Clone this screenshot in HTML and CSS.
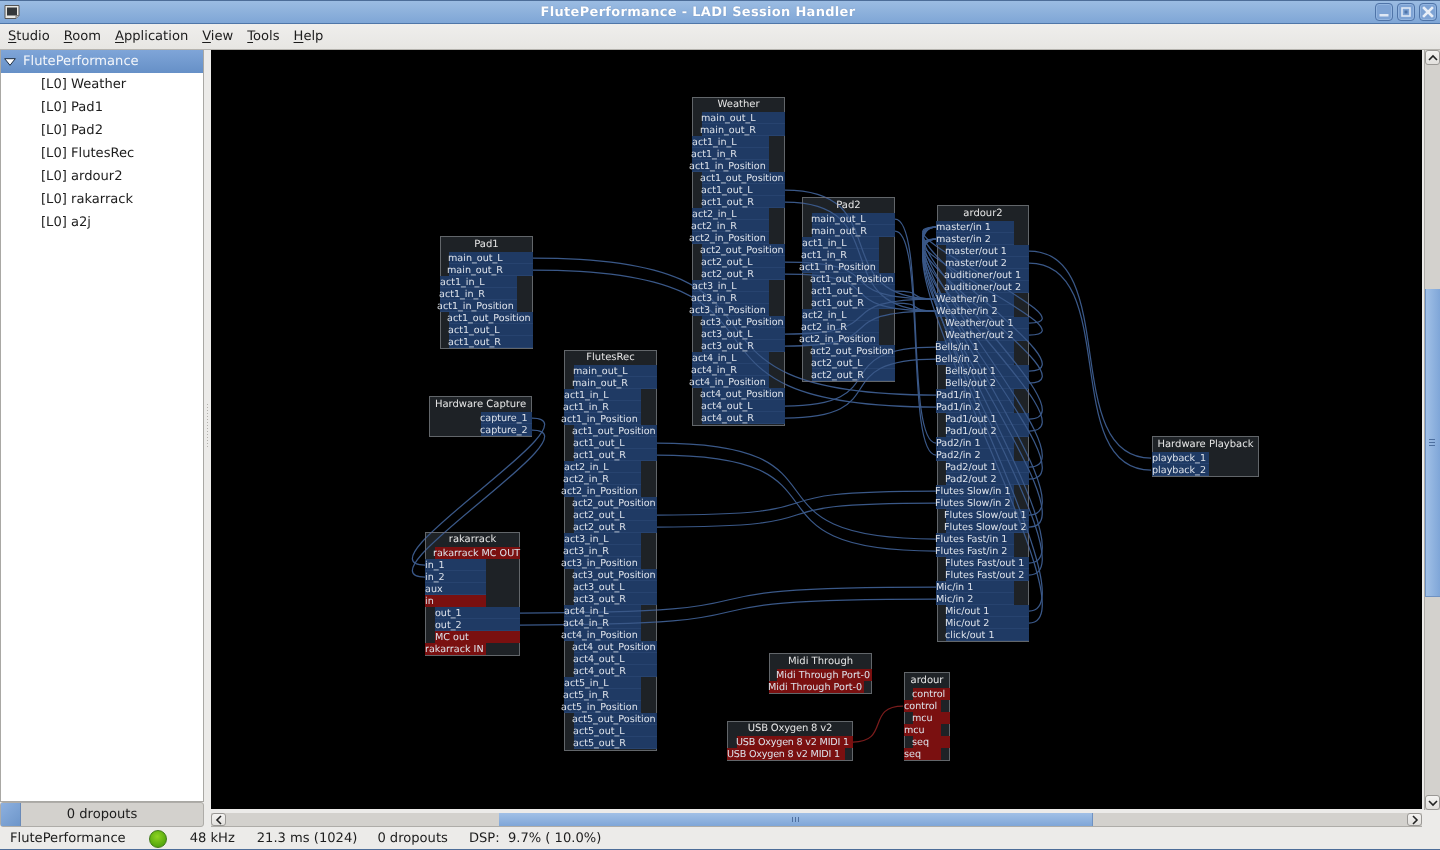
FILE: index.html
```html
<!DOCTYPE html>
<html lang="en">
<head>
<meta charset="utf-8">
<title>FlutePerformance - LADI Session Handler</title>
<link rel="stylesheet" href="styles.css">
</head>
<body>
<div class="window">
  <header class="titlebar">
    <svg class="appicon" width="16" height="16" viewBox="0 0 16 16"><path d="M1 1.5h14v10l-3 3H1z" fill="#e8e8e4" stroke="#555" stroke-width="1"/><rect x="3" y="3.5" width="10" height="8" fill="#33373a"/><path d="M12 14.5v-3h3" fill="#bbb" stroke="#777"/></svg>
    <div class="wintitle">FlutePerformance - LADI Session Handler</div>
    <div class="winbtns">
      <div class="winbtn"><svg width="18" height="18" viewBox="0 0 18 18"><rect x="4.5" y="11" width="9" height="2.5" fill="#dfe8f4"/></svg></div>
      <div class="winbtn"><svg width="18" height="18" viewBox="0 0 18 18"><rect x="5" y="5" width="8" height="8" fill="none" stroke="#dfe8f4" stroke-width="1.6"/><rect x="7.5" y="7.5" width="3" height="3" fill="#4f74a8"/></svg></div>
      <div class="winbtn"><svg width="18" height="18" viewBox="0 0 18 18"><path d="M5 5l8 8M13 5l-8 8" stroke="#e8eef7" stroke-width="2.6" stroke-linecap="square"/></svg></div>
    </div>
  </header>
  <nav class="menubar">
    <span class="menu"><u>S</u>tudio</span>
    <span class="menu"><u>R</u>oom</span>
    <span class="menu"><u>A</u>pplication</span>
    <span class="menu"><u>V</u>iew</span>
    <span class="menu"><u>T</u>ools</span>
    <span class="menu"><u>H</u>elp</span>
  </nav>
  <main class="content">
    <aside class="sidebar">
      <div class="tree">
        <div class="tree-head"><svg class="expander" width="12" height="8" viewBox="0 0 12 8"><path d="M.7.7h10.6L6 7.3z" fill="#fff" stroke="#1c2a3c" stroke-width="1"/></svg>FlutePerformance</div>
        <div class="tree-item">[L0] Weather</div>
        <div class="tree-item">[L0] Pad1</div>
        <div class="tree-item">[L0] Pad2</div>
        <div class="tree-item">[L0] FlutesRec</div>
        <div class="tree-item">[L0] ardour2</div>
        <div class="tree-item">[L0] rakarrack</div>
        <div class="tree-item">[L0] a2j</div>
      </div>
      <div class="progress"><div class="progress-fill"></div><span class="progress-text">0 dropouts</span></div>
    </aside>
    <div class="splitter"><div class="grip"></div></div>
    <section class="workspace">
      <div class="view-row">
        <div class="canvas">
          <div class="node n-pad1">
            <div class="title">Pad1</div>
            <div class="port out">main_out_L</div><div class="port out x2">main_out_R</div>
            <div class="port in">act1_in_L</div><div class="port in x1">act1_in_R</div><div class="port in x3">act1_in_Position</div>
            <div class="port out x2">act1_out_Position</div><div class="port out">act1_out_L</div><div class="port out">act1_out_R</div>
          </div>

          <div class="node n-weather short">
            <div class="title">Weather</div>
            <div class="port out">main_out_L</div><div class="port out x2">main_out_R</div>
            <div class="port in">act1_in_L</div><div class="port in x1">act1_in_R</div><div class="port in x3">act1_in_Position</div>
            <div class="port out x2">act1_out_Position</div><div class="port out">act1_out_L</div><div class="port out">act1_out_R</div>
            <div class="port in">act2_in_L</div><div class="port in x1">act2_in_R</div><div class="port in x3">act2_in_Position</div>
            <div class="port out x2">act2_out_Position</div><div class="port out">act2_out_L</div><div class="port out">act2_out_R</div>
            <div class="port in">act3_in_L</div><div class="port in x1">act3_in_R</div><div class="port in x3">act3_in_Position</div>
            <div class="port out x2">act3_out_Position</div><div class="port out">act3_out_L</div><div class="port out">act3_out_R</div>
            <div class="port in">act4_in_L</div><div class="port in x1">act4_in_R</div><div class="port in x3">act4_in_Position</div>
            <div class="port out x2">act4_out_Position</div><div class="port out">act4_out_L</div><div class="port out">act4_out_R</div>
          </div>

          <div class="node n-pad2">
            <div class="title">Pad2</div>
            <div class="port out">main_out_L</div><div class="port out x1">main_out_R</div>
            <div class="port in">act1_in_L</div><div class="port in x1">act1_in_R</div><div class="port in x3">act1_in_Position</div>
            <div class="port out x2">act1_out_Position</div><div class="port out">act1_out_L</div><div class="port out">act1_out_R</div>
            <div class="port in">act2_in_L</div><div class="port in x1">act2_in_R</div><div class="port in x3">act2_in_Position</div>
            <div class="port out x2">act2_out_Position</div><div class="port out">act2_out_L</div><div class="port out">act2_out_R</div>
          </div>

          <div class="node n-flutes short">
            <div class="title">FlutesRec</div>
            <div class="port out">main_out_L</div><div class="port out x2">main_out_R</div>
            <div class="port in">act1_in_L</div><div class="port in x1">act1_in_R</div><div class="port in x3">act1_in_Position</div>
            <div class="port out x2">act1_out_Position</div><div class="port out">act1_out_L</div><div class="port out">act1_out_R</div>
            <div class="port in">act2_in_L</div><div class="port in x1">act2_in_R</div><div class="port in x3">act2_in_Position</div>
            <div class="port out x2">act2_out_Position</div><div class="port out">act2_out_L</div><div class="port out">act2_out_R</div>
            <div class="port in">act3_in_L</div><div class="port in x1">act3_in_R</div><div class="port in x3">act3_in_Position</div>
            <div class="port out x2">act3_out_Position</div><div class="port out">act3_out_L</div><div class="port out">act3_out_R</div>
            <div class="port in">act4_in_L</div><div class="port in x1">act4_in_R</div><div class="port in x3">act4_in_Position</div>
            <div class="port out x2">act4_out_Position</div><div class="port out">act4_out_L</div><div class="port out">act4_out_R</div>
            <div class="port in">act5_in_L</div><div class="port in x1">act5_in_R</div><div class="port in x3">act5_in_Position</div>
            <div class="port out x2">act5_out_Position</div><div class="port out">act5_out_L</div><div class="port out">act5_out_R</div>
          </div>

          <div class="node n-ardour2">
            <div class="title">ardour2</div>
            <div class="port in">master/in 1</div><div class="port in">master/in 2</div>
            <div class="port out">master/out 1</div><div class="port out">master/out 2</div>
            <div class="port out x2">auditioner/out 1</div><div class="port out x2">auditioner/out 2</div>
            <div class="port in">Weather/in 1</div><div class="port in">Weather/in 2</div>
            <div class="port out">Weather/out 1</div><div class="port out">Weather/out 2</div>
            <div class="port in x1">Bells/in 1</div><div class="port in x1">Bells/in 2</div>
            <div class="port out">Bells/out 1</div><div class="port out">Bells/out 2</div>
            <div class="port in">Pad1/in 1</div><div class="port in">Pad1/in 2</div>
            <div class="port out">Pad1/out 1</div><div class="port out">Pad1/out 2</div>
            <div class="port in">Pad2/in 1</div><div class="port in">Pad2/in 2</div>
            <div class="port out">Pad2/out 1</div><div class="port out">Pad2/out 2</div>
            <div class="port in x1">Flutes Slow/in 1</div><div class="port in x1">Flutes Slow/in 2</div>
            <div class="port out x2">Flutes Slow/out 1</div><div class="port out x2">Flutes Slow/out 2</div>
            <div class="port in x1">Flutes Fast/in 1</div><div class="port in x1">Flutes Fast/in 2</div>
            <div class="port out">Flutes Fast/out 1</div><div class="port out">Flutes Fast/out 2</div>
            <div class="port in">Mic/in 1</div><div class="port in">Mic/in 2</div>
            <div class="port out">Mic/out 1</div><div class="port out">Mic/out 2</div>
            <div class="port out">click/out 1</div>
          </div>

          <div class="node n-capture">
            <div class="title">Hardware Capture</div>
            <div class="port out">capture_1</div><div class="port out">capture_2</div>
          </div>

          <div class="node n-playback">
            <div class="title">Hardware Playback</div>
            <div class="port in">playback_1</div><div class="port in">playback_2</div>
          </div>

          <div class="node n-rakarrack short">
            <div class="title">rakarrack</div>
            <div class="port out midi x2">rakarrack MC OUT</div>
            <div class="port in">in_1</div><div class="port in">in_2</div><div class="port in">aux</div>
            <div class="port in midi">in</div>
            <div class="port out">out_1</div><div class="port out">out_2</div>
            <div class="port out midi">MC out</div>
            <div class="port in midi">rakarrack IN</div>
          </div>

          <div class="node n-midi">
            <div class="title">Midi Through</div>
            <div class="port out midi">Midi Through Port-0</div>
            <div class="port in midi">Midi Through Port-0</div>
          </div>

          <div class="node n-usb short">
            <div class="title">USB Oxygen 8 v2</div>
            <div class="port out midi">USB Oxygen 8 v2 MIDI 1</div>
            <div class="port in midi">USB Oxygen 8 v2 MIDI 1</div>
          </div>

          <div class="node n-ardour">
            <div class="title">ardour</div>
            <div class="port out midi">control</div><div class="port in midi">control</div>
            <div class="port out midi">mcu</div><div class="port in midi">mcu</div>
            <div class="port out midi">seq</div><div class="port in midi">seq</div>
          </div>

          <svg class="wires" width="1211" height="759" viewBox="211 50 1211 759">
            <g class="audio">
              <path d="M532 418C602 418 355 565 425 565"/>
              <path d="M532 430C602 430 355 577 425 577"/>
              <path d="M533 258C835 258 634 395 936 395"/>
              <path d="M533 270C835 270 634 407 936 407"/>
              <path d="M785 190C898 190 823 299 936 299"/>
              <path d="M785 202C898 202 823 311 936 311"/>
              <path d="M785 262C898 262 823 299 936 299"/>
              <path d="M785 274C898 274 823 311 936 311"/>
              <path d="M785 334C898 334 823 299 936 299"/>
              <path d="M785 346C898 346 823 311 936 311"/>
              <path d="M785 406C898 406 823 347 936 347"/>
              <path d="M785 418C898 418 823 359 936 359"/>
              <path d="M895 219C926 219 905 443 936 443"/>
              <path d="M895 231C926 231 905 455 936 455"/>
              <path d="M895 291C926 291 905 299 936 299"/>
              <path d="M895 303C926 303 905 311 936 311"/>
              <path d="M657 443C866 443 727 539 936 539"/>
              <path d="M657 455C866 455 727 551 936 551"/>
              <path d="M657 515C866 515 727 491 936 491"/>
              <path d="M657 527C866 527 727 503 936 503"/>
              <path d="M520 613C832 613 624 587 936 587"/>
              <path d="M520 625C832 625 624 599 936 599"/>
              <path d="M1029 251C1121 251 1059 458 1151 458"/>
              <path d="M1029 263C1121 263 1059 470 1151 470"/>
              <path d="M1029 323C1099 323 866 227 936 227"/>
              <path d="M1029 335C1099 335 866 239 936 239"/>
              <path d="M1029 371C1099 371 866 227 936 227"/>
              <path d="M1029 383C1099 383 866 239 936 239"/>
              <path d="M1029 419C1099 419 866 227 936 227"/>
              <path d="M1029 431C1099 431 866 239 936 239"/>
              <path d="M1029 467C1099 467 866 227 936 227"/>
              <path d="M1029 479C1099 479 866 239 936 239"/>
              <path d="M1029 515C1099 515 866 227 936 227"/>
              <path d="M1029 527C1099 527 866 239 936 239"/>
              <path d="M1029 563C1099 563 866 227 936 227"/>
              <path d="M1029 575C1099 575 866 239 936 239"/>
              <path d="M1029 611C1099 611 866 227 936 227"/>
              <path d="M1029 623C1099 623 866 239 936 239"/>
            </g>
            <path class="midiwire" d="M853 742C890 742 866 706 903 706"/>
          </svg>
        </div>
        <div class="vscroll">
          <div class="sb-btn sb-up"><svg width="12" height="8" viewBox="0 0 12 8"><path d="M2 6l4-4 4 4" fill="none" stroke="#222" stroke-width="1.6"/></svg></div>
          <div class="v-track-a"></div>
          <div class="v-thumb"><svg width="8" height="9" viewBox="0 0 8 9"><path d="M0 1.5h6M0 4.5h6M0 7.5h6" stroke="#4d6f9f" stroke-width="1"/></svg></div>
          <div class="v-track-b"></div>
          <div class="sb-btn sb-down"><svg width="12" height="8" viewBox="0 0 12 8"><path d="M2 2l4 4 4-4" fill="none" stroke="#222" stroke-width="1.6"/></svg></div>
        </div>
      </div>
      <div class="hscroll">
        <div class="sb-btn sb-left"><svg width="8" height="12" viewBox="0 0 8 12"><path d="M6 2L2 6l4 4" fill="none" stroke="#222" stroke-width="1.6"/></svg></div>
        <div class="h-track-a"></div>
        <div class="h-thumb"><svg width="9" height="8" viewBox="0 0 9 8"><path d="M1.5 1v5M4.5 1v5M7.5 1v5" stroke="#4d6f9f" stroke-width="1"/></svg></div>
        <div class="h-track-b"></div>
        <div class="sb-btn sb-right"><svg width="8" height="12" viewBox="0 0 8 12"><path d="M2 2l4 4-4 4" fill="none" stroke="#222" stroke-width="1.6"/></svg></div>
      </div>
    </section>
  </main>
  <footer class="statusbar">
    <span class="st-name">FlutePerformance</span>
    <span class="led"></span>
    <span class="st-rate">48 kHz</span>
    <span class="st-lat">21.3 ms (1024)</span>
    <span class="st-drop">0 dropouts</span>
    <span class="st-dsp">DSP:&nbsp; 9.7% ( 10.0%)</span>
  </footer>
</div>
</body>
</html>
```
FILE: styles.css
```css
* { box-sizing: border-box; }
html, body { margin: 0; padding: 0; height: 100%; overflow: hidden; }
body { font-family: "DejaVu Sans", sans-serif; color: #1c1c1c; background: #ecebe9; text-rendering: geometricPrecision; }
.window { width: 1440px; height: 850px; display: flex; flex-direction: column; }

.titlebar { height: 24px; flex: none; display: flex; align-items: center; position: relative;
  background: linear-gradient(#9bbce2, #7fa6d6); border-top: 1px solid #4d6d98; border-bottom: 1px solid #4f76a8; }
.appicon { margin-left: 4px; flex: none; }
.wintitle { position: absolute; left: 0; right: 44px; top: 4px; text-align: center; color: #fff; font-weight: bold; font-size: 13px; line-height: 16px; letter-spacing: .3px; text-shadow: 0 0 1px #5a7eb0; }
.winbtns { margin-left: auto; display: flex; gap: 4px; padding-right: 3px; }
.winbtn { width: 18px; height: 18px; border: 1px solid #4f74a8; border-radius: 4px; background: #7ea3d4; display: flex; align-items: center; justify-content: center; box-shadow: inset 0 0 0 1px #93b5e0; }
.winbtn svg { flex: none; margin: -1px; }

.menubar { height: 26px; flex: none; display: flex; align-items: center; padding-left: 8px; gap: 14px; font-size: 13.1px; background: linear-gradient(#efeeec, #e7e6e3); border-bottom: 1px solid #b5b3ae; }
.menu u { text-underline-offset: 2px; }

.content { flex: 1; display: flex; min-height: 0; }
.sidebar { width: 204px; flex: none; display: flex; flex-direction: column; }
.tree { flex: 1; background: #fff; border: 1px solid #a9a8a4; border-top: 0; font-size: 13.1px; }
.tree-head { height: 23px; line-height: 24px; color: #f2f5fa; background: linear-gradient(#7fa5d8, #6690c7); padding-left: 22px; position: relative; }
.expander { position: absolute; left: 3px; top: 8px; }
.tree-item { height: 23px; line-height: 24px; padding-left: 40px; color: #1c1c1c; }
.progress { height: 25px; flex: none; position: relative; background: #d3d1cd; border: 1px solid #aeaca8; border-radius: 3px; display: flex; align-items: center; justify-content: center; font-size: 13.1px; }
.progress-fill { position: absolute; left: 0; top: 0; bottom: 0; width: 20px; background: linear-gradient(135deg, #8db0df, #6d96ca); border-right: 1px solid #6a8ab8; }
.progress-text { position: relative; }
.splitter { width: 7px; flex: none; display: flex; align-items: center; justify-content: center; }
.grip { width: 3px; height: 46px; margin-top: -25px; background-image: radial-gradient(#b2b0ac 40%, transparent 45%); background-size: 3px 3px; }

.workspace { flex: 1; min-width: 0; display: flex; flex-direction: column; }
.view-row { height: 760px; display: flex; flex: none; }
.canvas { width: 1211px; height: 759px; margin-bottom: 1px; background: #000; position: relative; overflow: hidden; flex: none; }

.node { position: absolute; display: flex; flex-direction: column; background: #1e2226; border: 1px solid #62666a; font-size: 9.6px; color: #dde2ea; }
.title { height: 15px; line-height: 15px; text-align: center; font-size: 10px; flex: none; white-space: nowrap; color: #e6e6e6; }
.short .title { height: 14px; line-height: 14px; }
.port { height: 12px; line-height: 13.5px; flex: none; white-space: nowrap; background: #1f3a64; box-shadow: inset 0 -1px #27436f; }
.in { width: var(--in); margin-left: -1px; align-self: flex-start; }
.out { width: var(--out); margin-right: -1px; align-self: flex-end; text-indent: -1px; }
.midi { background: #7a1010; box-shadow: none; }
.x1 { text-indent: -1px; }
.x2 { text-indent: -2px; }
.x3 { text-indent: -3px; }

.n-pad1 { left: 229px; top: 186px; width: 93px; height: 113px; --in: 77px; --out: 84px; }
.n-weather { left: 481px; top: 47px; width: 93px; height: 329px; --in: 77px; --out: 83px; }
.n-pad2 { left: 591px; top: 147px; width: 93px; height: 185px; --in: 77px; --out: 83px; }
.n-flutes { left: 353px; top: 300px; width: 93px; height: 401px; --in: 77px; --out: 83px; }
.n-ardour2 { left: 726px; top: 155px; width: 92px; height: 437px; --in: 78px; --out: 83px; }
.n-ardour2 .in { margin-left: -2px; }
.n-capture { left: 218px; top: 346px; width: 103px; height: 41px; --in: 50px; --out: 51px; }
.n-playback { left: 941px; top: 386px; width: 107px; height: 41px; --in: 57px; --out: 50px; }
.n-rakarrack { left: 214px; top: 482px; width: 95px; height: 124px; --in: 61px; --out: 85px; }
.n-rakarrack .out { text-indent: 0; }
.n-rakarrack .out.x2 { text-indent: -2px; }
.n-midi { left: 558px; top: 603px; width: 103px; height: 41px; --in: 95px; --out: 95px; }
.n-usb { left: 516px; top: 671px; width: 126px; height: 40px; --in: 118px; --out: 116px; letter-spacing: -.2px; }
.n-ardour { left: 693px; top: 622px; width: 46px; height: 89px; --in: 37px; --out: 37px; }
.n-midi .in { text-indent: -1px; }

.wires { position: absolute; left: 0; top: 0; pointer-events: none; mix-blend-mode: lighten; }
.audio path { fill: none; stroke: #3a5888; stroke-width: 1.25; }
.midiwire { fill: none; stroke: #7a1c1c; stroke-width: 1.25; }

.vscroll { width: 16px; margin-left: 2px; flex: none; display: flex; flex-direction: column; background: #d3d1cd; border-left: 1px solid #aeaca8; }
.sb-btn { background: linear-gradient(#f4f3f1, #e2e0dd); border: 1px solid #9a9895; display: flex; align-items: center; justify-content: center; flex: none; }
.sb-up, .sb-down { height: 15px; border-radius: 3px; }
.v-track-a { height: 224px; flex: none; }
.v-thumb { height: 308px; flex: none; background: linear-gradient(90deg, #a1c0e6, #7fa6d8); border-left: 1px solid #6f92c2; border-bottom: 1px solid #6f92c2; display: flex; align-items: center; justify-content: center; }
.v-track-b { flex: 1; }

.hscroll { height: 14px; width: 1211px; margin-top: 3px; flex: none; display: flex; background: #d3d1cd; border-bottom: 1px solid #aeaca8; }
.sb-left, .sb-right { width: 15px; border-radius: 3px; }
.h-track-a { width: 273px; flex: none; }
.h-thumb { width: 594px; flex: none; background: linear-gradient(#a1c0e6, #7fa6d8); border-right: 1px solid #6f92c2; display: flex; align-items: center; justify-content: center; }
.h-track-b { flex: 1; }

.statusbar { height: 23px; flex: none; display: flex; align-items: center; font-size: 13.1px; padding-left: 10px; padding-top: 1px; background: #ecebe9; border-bottom: 1px solid #4d6d98; }
.led { width: 18px; height: 18px; border-radius: 50%; background: radial-gradient(circle at 45% 35%, #8fd422, #55a80e 70%); border: 1px solid #3f7a18; margin-left: 23px; }
.st-rate { margin-left: 23px; }
.st-lat { margin-left: 22px; }
.st-drop { margin-left: 20px; }
.st-dsp { margin-left: 21px; }
```
